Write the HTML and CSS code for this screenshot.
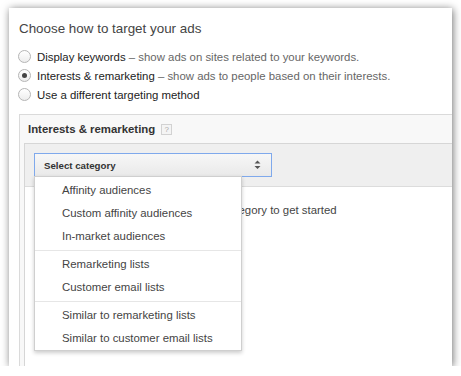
FILE: index.html
```html
<!DOCTYPE html>
<html>
<head>
<meta charset="utf-8">
<link rel="stylesheet" href="styles.css">
</head>
<body>
<div class="card">
  <h1 class="title">Choose how to target your ads</h1>
  <ul class="radios">
    <li class="radio-row"><span class="radio"></span><span class="text"><span class="label">Display keywords</span><span class="desc"> – show ads on sites related to your keywords.</span></span></li>
    <li class="radio-row"><span class="radio checked"></span><span class="text"><span class="label">Interests &amp; remarketing</span><span class="desc"> – show ads to people based on their interests.</span></span></li>
    <li class="radio-row"><span class="radio"></span><span class="text"><span class="label">Use a different targeting method</span></span></li>
  </ul>
  <div class="panel">
    <div class="panel-head">Interests &amp; remarketing <span class="help">?</span></div>
    <div class="panel-body">
      <div class="inner">
        <div class="toolbar">
          <div class="select-wrap">
            <div class="select">
              <span>Select category</span>
              <svg class="arrows" width="7" height="10" viewBox="0 0 7 10"><path d="M3.5 0.5 L6.5 3.5 L0.5 3.5 Z M0.5 6 L6.5 6 L3.5 9 Z" fill="#555"/></svg>
            </div>
            <div class="menu">
              <ul class="group">
                <li>Affinity audiences</li>
                <li>Custom affinity audiences</li>
                <li>In-market audiences</li>
              </ul>
              <ul class="group">
                <li>Remarketing lists</li>
                <li>Customer email lists</li>
              </ul>
              <ul class="group last">
                <li>Similar to remarketing lists</li>
                <li>Similar to customer email lists</li>
              </ul>
            </div>
          </div>
        </div>
        <div class="content">Select a category to get started</div>
      </div>
    </div>
  </div>
</div>
</body>
</html>
```
FILE: styles.css
```css
* { box-sizing: border-box; }
html, body { margin: 0; padding: 0; background: #fff; }
body {
  font-family: "Liberation Sans", Arial, sans-serif;
  font-size: 11.4px;
  color: #333;
}
.card {
  margin: 8px 9px 0 9px;
  width: 443px;
  height: 358px;
  background: #fff;
  box-shadow: 1px 1px 8px rgba(0,0,0,0.55);
  padding-left: 10px;
  overflow: hidden;
}
.title {
  margin: 0;
  padding-top: 12px;
  font-size: 13.4px;
  line-height: 18px;
  font-weight: normal;
  color: #444;
}
.radios {
  list-style: none;
  margin: 9px 0 0 0;
  padding: 0;
}
.radio-row {
  display: flex;
  align-items: center;
  height: 19px;
  white-space: nowrap;
}
.radio {
  width: 13px;
  height: 13px;
  border-radius: 50%;
  border: 1px solid #b5b5b5;
  background: linear-gradient(#fff, #ededed);
  margin-left: -1px;
  margin-right: 6px;
  display: flex;
  align-items: center;
  justify-content: center;
  flex: none;
}
.radio.checked::after {
  content: "";
  width: 5px;
  height: 5px;
  border-radius: 50%;
  background: #444;
}
.label { color: #222; }
.desc { color: #666; }
.panel {
  margin-top: 10px;
  border-top: 1px solid #dadada;
  border-left: 1px solid #dadada;
  background: #f8f8f8;
  width: 460px;
  height: 300px;
}
.panel-head {
  height: 28px;
  display: flex;
  align-items: center;
  padding-left: 8px;
  font-weight: bold;
  color: #333;
}
.help {
  display: inline-flex;
  align-items: center;
  justify-content: center;
  width: 11px;
  height: 11px;
  margin-left: 6px;
  border: 1px solid #d2d2d2;
  background: #f4f4f4;
  color: #aaa;
  font-size: 8px;
  font-weight: normal;
}
.panel-body { padding-left: 4px; height: 272px; }
.inner {
  border-top: 1px solid #d6d6d6;
  border-left: 1px solid #d6d6d6;
  height: 100%;
  background: #fff;
}
.toolbar {
  background: #efefef;
  border-bottom: 1px solid #dcdcdc;
  padding: 9px 9px;
  height: 43px;
}
.select-wrap { position: relative; width: 238px; }
.select {
  height: 24px;
  border: 1px solid #7fa9ec;
  background: linear-gradient(#f7f7f7, #e9e9e9);
  display: flex;
  align-items: center;
  justify-content: space-between;
  padding: 0 10px 0 9px;
  font-size: 9.7px;
  font-weight: bold;
  color: #333;
}
.arrows { display: block; }
.menu {
  position: absolute;
  left: 0;
  top: 23px;
  width: 208px;
  background: #fff;
  border: 1px solid #cfcfcf;
  box-shadow: 0 2px 4px rgba(0,0,0,0.2);
  z-index: 2;
}
.group {
  list-style: none;
  margin: 0;
  padding: 2px 0;
  border-bottom: 1px solid #e6e6e6;
}
.group.last { border-bottom: none; padding-bottom: 0; }
.group li {
  height: 23px;
  line-height: 23px;
  padding-left: 27px;
  color: #444;
  white-space: nowrap;
}
.content {
  padding: 14px 0 0 154px;
  line-height: 19px;
  color: #444;
  white-space: nowrap;
}
```
